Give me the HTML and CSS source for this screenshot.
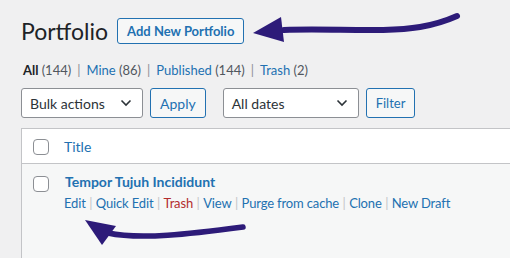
FILE: index.html
```html
<!DOCTYPE html>
<html lang="en">
<head>
<meta charset="UTF-8">
<title>Portfolio</title>
<link rel="stylesheet" href="styles.css">
</head>
<body>
<div class="wrap">
  <div class="heading">
    <h1>Portfolio</h1>
    <a class="page-title-action" href="#">Add New Portfolio</a>
  </div>

  <ul class="subsubsub">
    <li class="current">All <span class="count">(144)</span></li>
    <li><span class="sep">|</span><a href="#">Mine <span class="count">(86)</span></a></li>
    <li><span class="sep">|</span><a href="#">Published <span class="count">(144)</span></a></li>
    <li><span class="sep">|</span><a href="#">Trash <span class="count">(2)</span></a></li>
  </ul>

  <div class="tablenav">
    <div class="select bulk">
      <span>Bulk actions</span>
      <svg width="12" height="8" viewBox="0 0 12 8"><path d="M1.5 1.5 L6 6 L10.5 1.5" fill="none" stroke="#2c3338" stroke-width="1.6"/></svg>
    </div>
    <button class="button">Apply</button>
    <div class="select dates">
      <span>All dates</span>
      <svg width="12" height="8" viewBox="0 0 12 8"><path d="M1.5 1.5 L6 6 L10.5 1.5" fill="none" stroke="#2c3338" stroke-width="1.6"/></svg>
    </div>
    <button class="button">Filter</button>
  </div>

  <table class="wp-list-table">
    <thead>
      <tr>
        <th class="check-column"><span class="checkbox"></span></th>
        <th class="column-title"><a href="#">Title</a></th>
      </tr>
    </thead>
    <tbody>
      <tr>
        <td class="check-column"><span class="checkbox"></span></td>
        <td class="column-title">
          <a class="row-title" href="#">Tempor Tujuh Incididunt</a>
          <div class="row-actions"><a href="#">Edit</a><span class="sep">|</span><a href="#">Quick Edit</a><span class="sep">|</span><a href="#" class="trash">Trash</a><span class="sep">|</span><a href="#">View</a><span class="sep">|</span><a href="#">Purge from cache</a><span class="sep">|</span><a href="#">Clone</a><span class="sep">|</span><a href="#">New Draft</a></div>
        </td>
      </tr>
    </tbody>
  </table>
</div>

<!-- hand-drawn annotation arrows -->
<svg class="annotations" width="510" height="258" viewBox="0 0 510 258">
  <path d="M284 30 C 330 28, 385 33, 420 27 C 438 24, 448 20, 457 16" fill="none" stroke="#2d1b79" stroke-width="6" stroke-linecap="round"/>
  <polygon points="253,33 281,17 284,42" fill="#2d1b79"/>
  <path d="M108 233 C 140 240, 190 234, 243 227" fill="none" stroke="#2d1b79" stroke-width="5.5" stroke-linecap="round"/>
  <polygon points="85,220 116,226 102,245" fill="#2d1b79"/>
</svg>
</body>
</html>
```

FILE: styles.css
```css
body {
  margin: 0;
  background: #f0f0f1;
  font-family: 'Lato', sans-serif;
  font-size: 13px;
  color: #3c434a;
  overflow: hidden;
}

a {
  color: #2271b1;
  text-decoration: none;
}

.wrap {
  padding: 18px 0 0 21px;
}

.heading {
  display: flex;
  align-items: center;
  gap: 9px;
  height: 26px;
}

h1 {
  margin: 0;
  font-size: 23px;
  font-weight: 400;
  color: #1d2327;
}

.page-title-action {
  display: inline-flex;
  align-items: center;
  height: 24px;
  padding: 0 9px;
  border: 1px solid #2271b1;
  border-radius: 3px;
  background: #f6f7f7;
  font-size: 13px;
  font-weight: 700;
}

.subsubsub {
  list-style: none;
  margin: 17px 0 0 2px;
  padding: 0;
  display: flex;
  height: 18px;
  align-items: center;
}

.subsubsub .current {
  color: #1d2327;
  font-weight: 700;
}

.subsubsub .count {
  color: #50575e;
  font-weight: 400;
}

.subsubsub .sep {
  color: #8c8f94;
  margin: 0 6px;
}

.tablenav {
  display: flex;
  margin-top: 9px;
  height: 30px;
  gap: 7px;
}

.select {
  box-sizing: border-box;
  display: flex;
  align-items: center;
  justify-content: space-between;
  height: 30px;
  padding: 0 10px 0 8px;
  border: 1px solid #8c8f94;
  border-radius: 3px;
  background: #fff;
  font-size: 14px;
  color: #2c3338;
}

.bulk { width: 122px; }
.dates { width: 136px; margin-left: 10px; }

.button {
  box-sizing: border-box;
  height: 30px;
  padding: 0 9px;
  border: 1px solid #2271b1;
  border-radius: 3px;
  background: #f6f7f7;
  color: #2271b1;
  font-family: 'Lato', sans-serif;
  font-size: 13px;
}

.tablenav .button:first-of-type { font-size: 14px; }

.wp-list-table {
  margin-top: 10px;
  width: 520px;
  border-collapse: collapse;
  border: 1px solid #c3c4c7;
  background: #fff;
}

.wp-list-table th,
.wp-list-table td {
  padding: 0;
  text-align: left;
  vertical-align: top;
  font-weight: 400;
}

.wp-list-table thead tr {
  height: 35px;
  border-bottom: 1px solid #c3c4c7;
}

.wp-list-table thead th {
  vertical-align: middle;
  font-size: 14px;
}

.wp-list-table tbody tr {
  background: #f6f7f7;
  height: 96px;
}

.check-column {
  width: 31px;
  padding-left: 11px !important;
}

.checkbox {
  display: block;
  box-sizing: border-box;
  width: 16px;
  height: 16px;
  border: 1px solid #8c8f94;
  border-radius: 4px;
  background: #fff;
}

.wp-list-table thead .checkbox { margin-top: 1px; }
.wp-list-table tbody .checkbox { margin-top: 12px; }

.row-title {
  display: block;
  margin-top: 9px;
  margin-left: 1px;
  font-size: 14px;
  font-weight: 700;
}

.row-actions {
  margin-top: 5px;
  letter-spacing: -0.15px;
}

.row-actions .sep {
  color: #c3c4c7;
  margin: 0 3.5px;
}

.row-actions .trash {
  color: #b32d2e;
}

.annotations {
  position: absolute;
  left: 0;
  top: 0;
  pointer-events: none;
}
```
